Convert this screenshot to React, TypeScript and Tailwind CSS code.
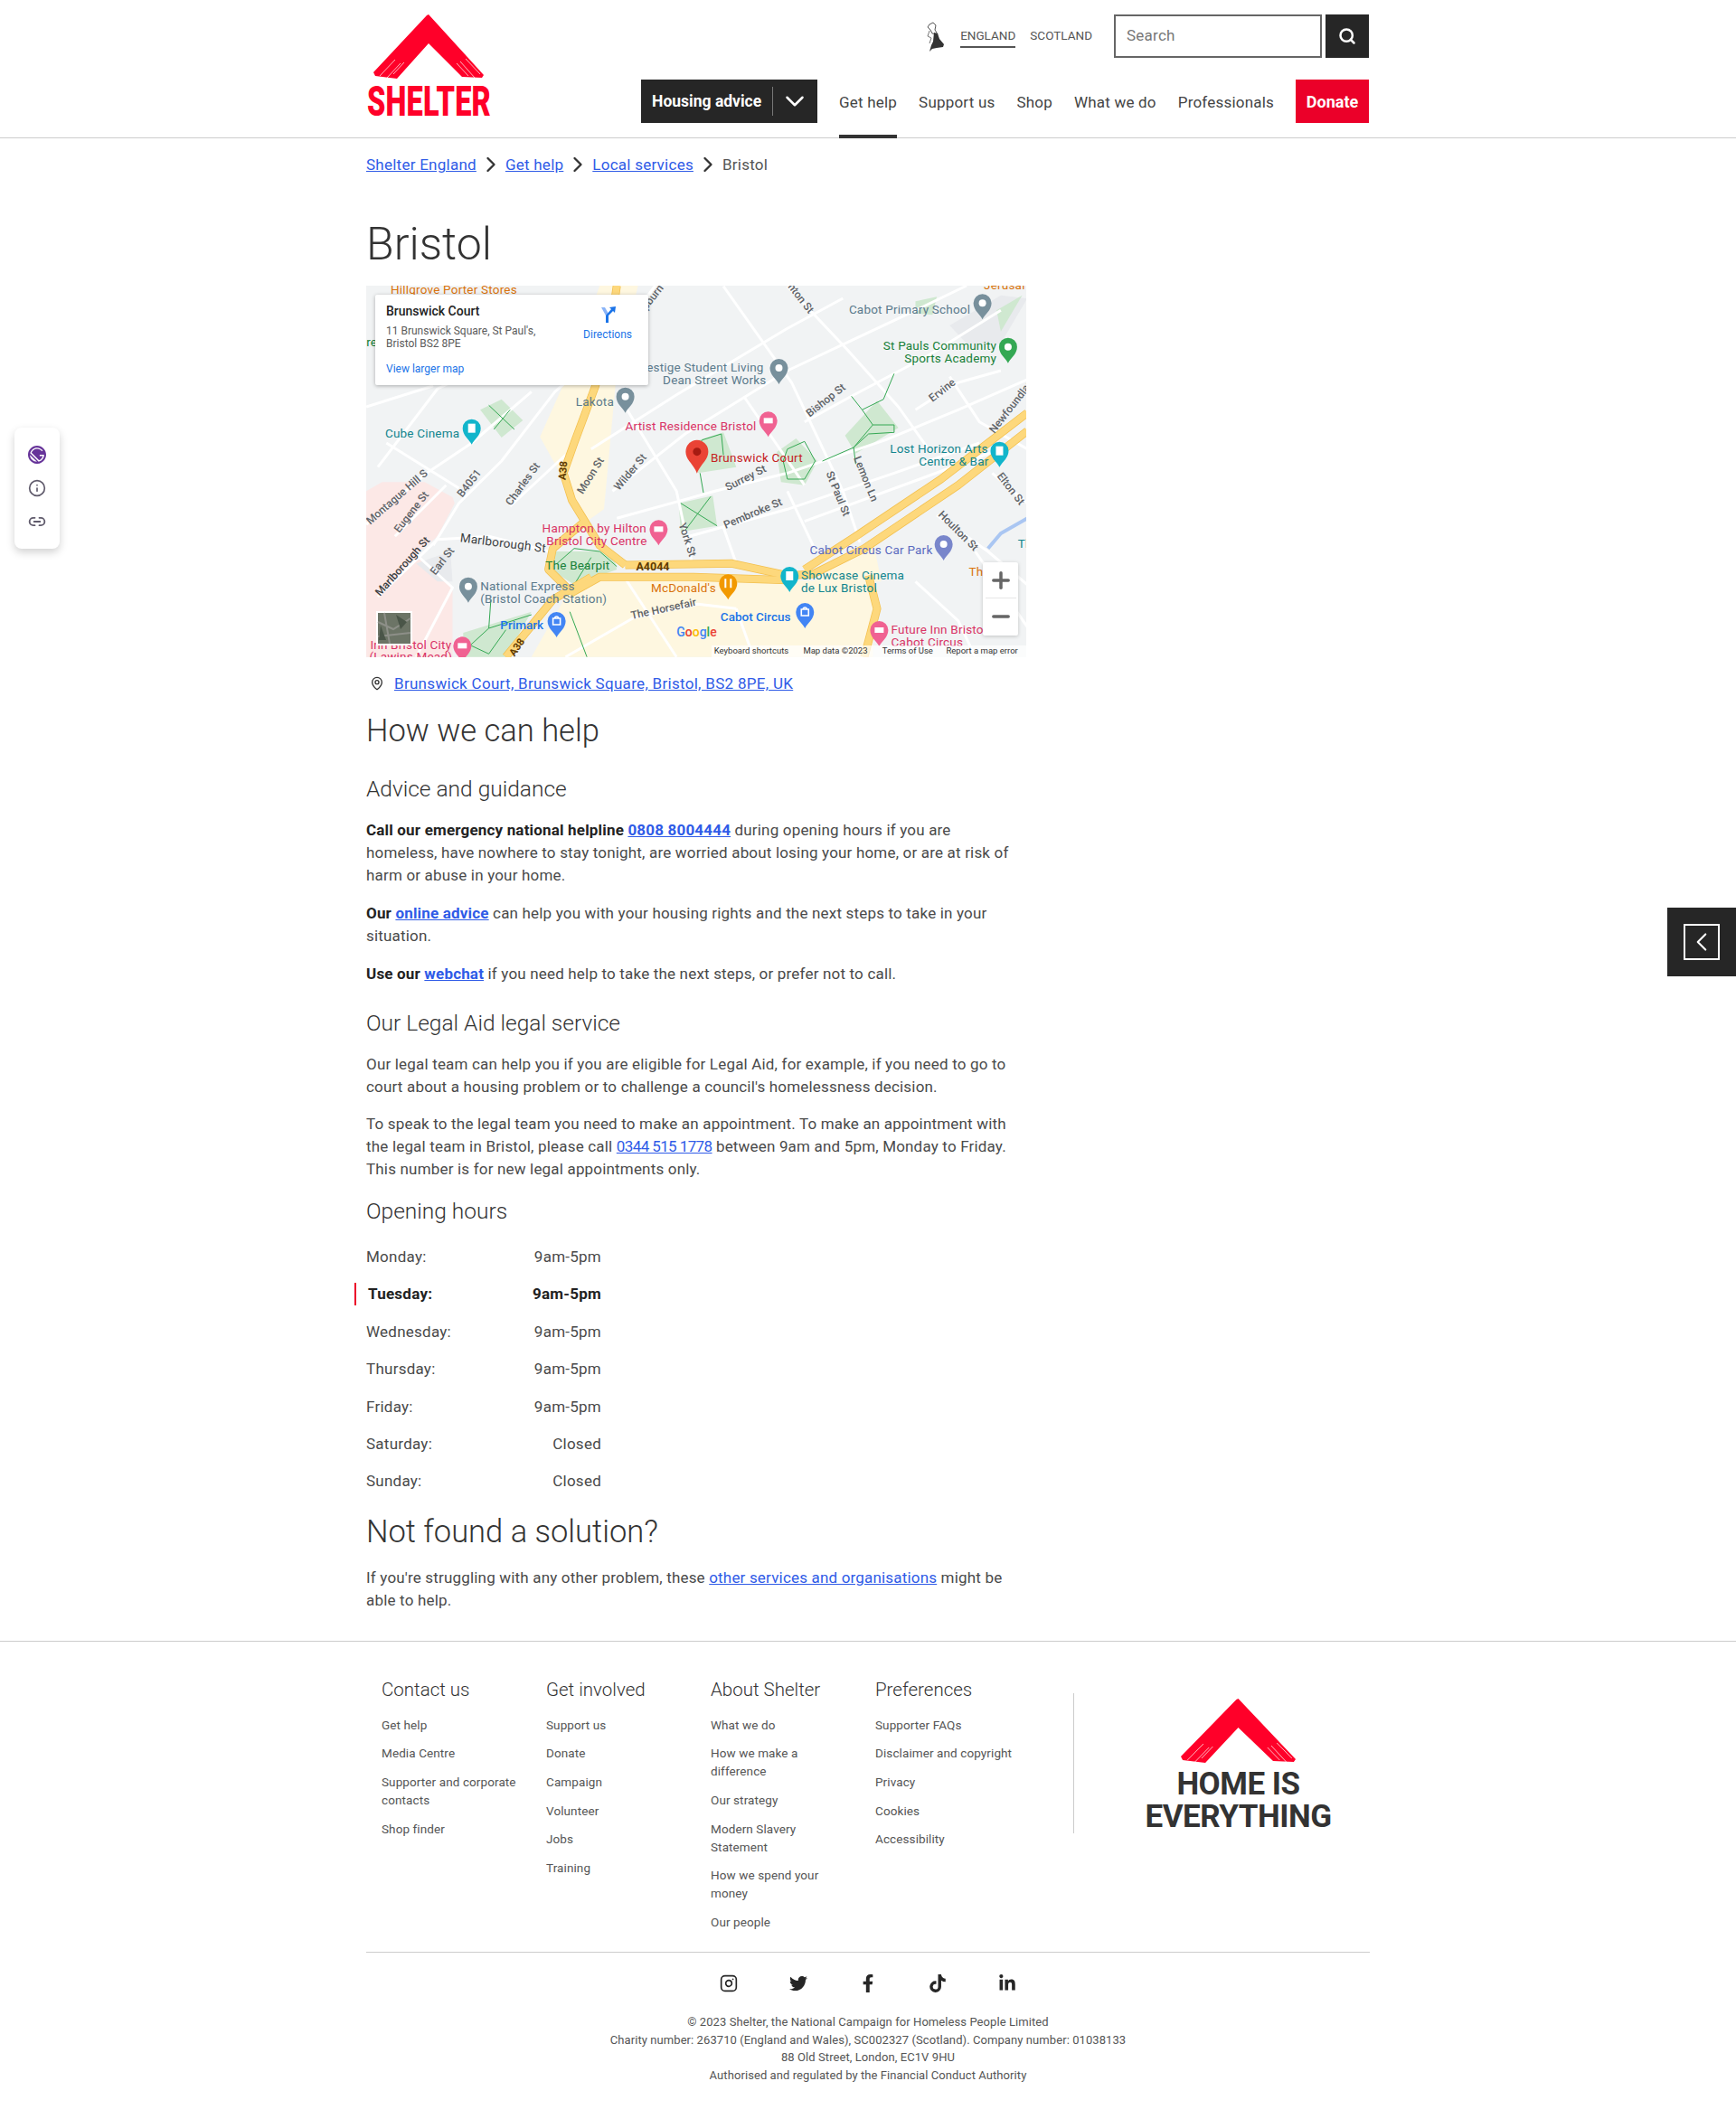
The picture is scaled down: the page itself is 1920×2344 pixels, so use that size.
import React from 'react';
import { ChevronDown, ChevronLeft, ChevronRight, Info, Instagram, Link2, MapPin, Minus, Plus, Search } from 'lucide-react';
import { FaFacebookF, FaLinkedinIn, FaTiktok, FaTwitter } from 'react-icons/fa';
import { SiGatsby } from 'react-icons/si';

const RED = '#ff0029';

// Brush-ended roof used in both logos
const RoofShape: React.FC = () => (
  <g>
    <path d="M61 0 L122 67 L120 70 L98 69 L61 32 L26 71 L2 68 L0 64 L59 1 Z" fill={RED} />
    <g stroke="#fff" strokeWidth="0.7" fill="none">
      <path d="M7 68 L24 50" />
      <path d="M15 70 L30 54" />
      <path d="M22 66 L34 53" />
      <path d="M112 70 L96 52" />
      <path d="M105 68 L92 54" />
      <path d="M118 66 L102 49" />
    </g>
  </g>
);

const ShelterLogo: React.FC = () => (
  <svg width="140" height="116" viewBox="0 0 140 116" className="block">
    <g transform="translate(8 1)">
      <RoofShape />
    </g>
    <text
      x="1"
      y="113"
      fill={RED}
      fontFamily="Roboto, sans-serif"
      fontWeight="900"
      fontSize="46"
      textLength="137"
      lengthAdjust="spacingAndGlyphs"
    >
      SHELTER
    </text>
  </svg>
);

const UkIcon: React.FC = () => (
  <svg width="24" height="34" viewBox="0 0 24 34" className="block">
    <path d="M9 1 L12 4 L11 9 L14 14 L8 13 L6 9 L3 6 L5 3 Z" fill="#fff" stroke="#555" strokeWidth="1" />
    <path d="M5 10 L3 16 L7 18 L5 24" fill="none" stroke="#777" strokeWidth="1" />
    <path d="M10 12 L14 13 L16 19 L21 25 L20 28 L13 29 L8 30 L5 33 L7 26 L9 22 Z" fill="#333" />
  </svg>
);

// --- map drawing. Points are measured off the reference crop, then scaled to map pixels ---
const mx = (z: number) => z / 2.119 - 6;
const my = (z: number) => z / 3 - 6;
const line = (pts: number[][]) => pts.map((p, i) => `${i ? 'L' : 'M'}${mx(p[0]).toFixed(1)} ${my(p[1]).toFixed(1)}`).join(' ');

const parks = [
  [[770, 540], [850, 505], [880, 620], [790, 640]],
  [[745, 740], [825, 715], [835, 815], [750, 835]],
  [[280, 430], [330, 395], [380, 465], [330, 522]],
  [[1135, 515], [1210, 400], [1260, 490], [1160, 575]],
  [[975, 570], [1020, 525], [1070, 600], [1040, 680], [985, 670]],
  [[450, 900], [590, 900], [600, 960], [500, 1010], [445, 960]],
  [[240, 1170], [400, 1100], [340, 1250], [240, 1250]],
  [[1300, 70], [1350, 55], [1340, 115], [1300, 110]],
  [[1490, 100], [1550, 50], [1500, 170]],
];

const parkPaths = [
  [[300, 415], [360, 495]],
  [[350, 430], [312, 495]],
  [[750, 740], [835, 815]],
  [[820, 718], [760, 830]],
  [[770, 600], [800, 530], [845, 510], [850, 580]],
  [[795, 640], [803, 705]],
  [[1082, 600], [1155, 555], [1200, 480], [1250, 480], [1250, 505], [1190, 510], [1155, 555]],
  [[1250, 310], [1225, 395], [1175, 430], [1150, 385]],
  [[1175, 430], [1200, 480]],
  [[1155, 555], [1160, 610]],
  [[1000, 560], [1040, 535], [1065, 600], [1040, 660], [1000, 660], [990, 600], [1000, 560]],
  [[460, 940], [500, 890], [560, 900], [600, 950]],
  [[500, 1010], [540, 920]],
  [[250, 1220], [300, 1155], [400, 1110]],
  [[240, 1200], [300, 1240], [340, 1160]],
  [[300, 1155], [305, 1060]],
  [[490, 1100], [530, 1250]],
];

const streets = [
  [[170, 880], [230, 740], [330, 600], [455, 370], [600, 190], [690, 18]],
  [[590, 700], [760, 510], [1000, 300], [1150, 200], [1300, 100], [1420, 18]],
  [[600, 790], [830, 700], [1000, 640], [1230, 530], [1400, 430], [1562, 330]],
  [[770, 850], [1000, 760], [1250, 640], [1450, 540]],
  [[620, 420], [740, 700], [775, 930]],
  [[850, 20], [1010, 340], [1130, 700], [1170, 870]],
  [[1000, 20], [1140, 230], [1260, 420], [1330, 560]],
  [[1040, 470], [1150, 385], [1330, 250], [1500, 100]],
  [[40, 1050], [180, 860], [300, 850], [440, 900]],
  [[13, 810], [155, 640], [260, 540], [400, 370]],
  [[80, 850], [200, 680]],
  [[350, 750], [480, 580]],
  [[480, 1250], [640, 1120], [790, 1075], [880, 1090]],
  [[1480, 640], [1562, 740]],
  [[1350, 780], [1470, 900], [1562, 1010]],
  [[13, 420], [170, 350]],
  [[40, 620], [180, 360], [240, 320]],
  [[230, 690], [60, 540]],
  [[1040, 800], [1310, 660], [1500, 560]],
  [[1300, 430], [1400, 340], [1500, 300]],
  [[1000, 700], [1060, 880]],
  [[900, 390], [1040, 680]],
  [[130, 1250], [215, 1020], [130, 910]],
  [[1380, 320], [1450, 470], [1562, 560]],
  [[850, 820], [880, 940]],
  [[620, 990], [740, 1250]],
  [[880, 1090], [920, 1250]],
  [[540, 560], [740, 380], [1000, 160], [1130, 60]],
  [[1300, 1000], [1400, 1130], [1440, 1250]],
  [[1440, 900], [1562, 1150]],
];

const highways = [
  [[600, 18], [590, 120], [550, 350], [500, 540], [475, 640], [495, 730], [525, 800], [560, 880], [620, 945]],
  [[620, 945], [870, 940], [1000, 980], [1060, 975], [1180, 890], [1400, 680], [1562, 500]],
  [[1040, 960], [1160, 850], [1360, 660], [1562, 440]],
  [[1190, 980], [1210, 1090], [1180, 1250]],
  [[525, 800], [450, 890], [440, 960], [490, 1030]],
  [[540, 985], [450, 1060], [340, 1250]],
  [[1000, 995], [780, 985], [560, 985], [490, 1040]],
];

type Lbl = [number, number, string, string, number?, 'start' | 'end'?];
const labels: Lbl[] = [
  [1144, 112, 'Cabot Primary School', '#5b7a8c'],
  [1490, 232, 'St Pauls Community', '#188038', 0, 'end'],
  [1490, 274, 'Sports Academy', '#188038', 0, 'end'],
  [670, 304, 'estige Student Living', '#5b7a8c'],
  [708, 346, 'Dean Street Works', '#5b7a8c'],
  [504, 418, 'Lakota', '#5b7a8c'],
  [620, 499, 'Artist Residence Bristol', '#d93366'],
  [820, 602, 'Brunswick Court', '#c5221f'],
  [57, 523, 'Cube Cinema', '#12858e'],
  [1240, 574, 'Lost Horizon Arts', '#12858e'],
  [1308, 616, 'Centre & Bar', '#12858e'],
  [425, 838, 'Hampton by Hilton', '#d93366'],
  [435, 880, 'Bristol City Centre', '#d93366'],
  [232, 868, 'Marlborough St', '#3c4043', 7],
  [433, 960, 'The Bearpit', '#188038'],
  [680, 1036, "McDonald's", '#d9730d'],
  [280, 1028, 'National Express', '#5b7a8c'],
  [280, 1070, '(Bristol Coach Station)', '#5b7a8c'],
  [1032, 992, 'Showcase Cinema', '#12858e'],
  [1032, 1034, 'de Lux Bristol', '#12858e'],
  [1052, 908, 'Cabot Circus Car Park', '#5c6bc0'],
  [1243, 1174, 'Future Inn Bristo', '#d93366'],
  [1243, 1216, 'Cabot Circus', '#d93366'],
  [22, 1225, 'Inn Bristol City', '#d93366'],
  [20, 1262, '(Lawins Mead)', '#d93366'],
  [1425, 982, 'Th', '#d9730d'],
  [1540, 888, 'Th', '#12858e'],
  [70, 44, 'Hillgrove Porter Stores', '#d9730d'],
  [1460, 30, 'Jerusal', '#d9730d'],
  [13, 220, 're', '#188038'],
];

const streetLabels: Lbl[] = [
  [1052, 455, 'Bishop St', '#5f6368', -38],
  [1340, 405, 'Ervine', '#5f6368', -38],
  [1485, 510, 'Newfoundland', '#5f6368', -52],
  [1490, 650, 'Elton St', '#5f6368', 52],
  [1352, 780, 'Houlton St', '#5f6368', 45],
  [1090, 640, 'St Paul St', '#5f6368', 68],
  [1155, 590, 'Lemon Ln', '#5f6368', 68],
  [860, 700, 'Surrey St', '#5f6368', -27],
  [855, 825, 'Pembroke St', '#5f6368', -23],
  [745, 810, 'York St', '#5f6368', 72],
  [605, 700, 'Wilder St', '#5f6368', -50],
  [520, 712, 'Moon St', '#5f6368', -58],
  [352, 750, 'Charles St', '#5f6368', -54],
  [90, 840, 'Eugene St', '#5f6368', -52],
  [175, 980, 'Earl St', '#5f6368', -52],
  [238, 722, 'B4051', '#5f6368', -52],
  [22, 812, 'Montague Hill S', '#5f6368', -41],
  [45, 1050, 'Marlborough St', '#3c4043', -48],
  [635, 1125, 'The Horsefair', '#5f6368', -12],
  [670, 100, 'pburn Rd', '#5f6368', -52],
  [1000, 22, 'nton St', '#5f6368', 52],
];

const Pin: React.FC<{ z: number[]; color: string; glyph?: React.ReactNode }> = ({ z, color, glyph }) => (
  <g transform={`translate(${mx(z[0])} ${my(z[1])})`}>
    <path d="M0 15 C-3 9 -10 5 -10 -3 A10 10 0 1 1 10 -3 C10 5 3 9 0 15 Z" fill={color} />
    {glyph ?? <circle cx="0" cy="-3" r="4" fill="#fff" />}
  </g>
);

const Bed = <rect x="-5" y="-6" width="10" height="6" fill="#fff" />;
const Film = <rect x="-4" y="-8" width="8" height="10" fill="#fff" />;
const Bag = <path d="M-4 -6 H4 V1 H-4 Z M-2 -6 A2 2 0 0 1 2 -6" fill="none" stroke="#fff" strokeWidth="1.6" />;
const Fork = <path d="M-3 -8 V2 M3 -8 V2" stroke="#fff" strokeWidth="2" />;

const MapDrawing: React.FC = () => (
  <svg width="730" height="411" viewBox="0 0 730 411" className="block font-['Roboto',sans-serif]">
    <rect width="730" height="411" fill="#f1f3f4" />
    {/* land use */}
    <path d={line([[13, 700], [50, 670], [150, 670], [215, 720], [220, 740], [180, 850], [130, 910], [215, 1020], [215, 1250], [13, 1250]]) + 'Z'} fill="#fce8e6" />
    <path d={line([[560, 18], [650, 18], [600, 300], [570, 760], [530, 800], [420, 520], [480, 330]]) + 'Z'} fill="#fef7e0" />
    <path d={line([[560, 990], [1200, 1000], [1200, 1250], [400, 1250], [480, 1050]]) + 'Z'} fill="#fef7e0" />
    <path d={line([[1060, 1000], [1200, 860], [1220, 1000]]) + 'Z'} fill="#fef7e0" />
    <path d={line([[1380, 150], [1500, 50], [1562, 60], [1500, 210], [1420, 210]]) + 'Z'} fill="#e8eaed" />
    <path d={line([[130, 940], [210, 900], [215, 1000], [180, 1000]]) + 'Z'} fill="#e8eaed" />
    {parks.map((p, i) => (
      <path key={i} d={line(p) + 'Z'} fill="#cfe8d0" />
    ))}
    {/* streets */}
    {streets.map((s, i) => (
      <path key={i} d={line(s)} fill="none" stroke="#fff" strokeWidth="3" strokeLinejoin="round" />
    ))}
    {parkPaths.map((p, i) => (
      <path key={i} d={line(p)} fill="none" stroke="#34a853" strokeWidth="1" />
    ))}
    <path d={line([[1470, 890], [1500, 840], [1562, 790]])} fill="none" stroke="#aac6f2" strokeWidth="4" />
    {highways.map((h, i) => (
      <path key={i} d={line(h)} fill="none" stroke="#f3c04f" strokeWidth="9" strokeLinejoin="round" />
    ))}
    {highways.map((h, i) => (
      <path key={i} d={line(h)} fill="none" stroke="#fdd87c" strokeWidth="7.5" strokeLinejoin="round" />
    ))}
    {/* labels */}
    {streetLabels.map(([x, y, t, c, r], i) => (
      <text key={i} transform={`translate(${mx(x)} ${my(y)}) rotate(${r ?? 0})`} fill={c} fontSize="12" fontWeight="500">
        {t}
      </text>
    ))}
    {labels.map(([x, y, t, c, r, a], i) => (
      <text key={i} transform={`translate(${mx(x)} ${my(y)}) rotate(${r ?? 0})`} textAnchor={a ?? 'start'} fill={c} fontSize="13.5" letterSpacing="0.2">
        {t}
      </text>
    ))}
    <text transform={`translate(${mx(480)} ${my(664)}) rotate(-85)`} fill="#5f3b00" fontSize="11.5" fontWeight="700">A38</text>
    <text transform={`translate(${mx(645)} ${my(964)})`} fill="#5f3b00" fontSize="12.5" fontWeight="700">A4044</text>
    <text transform={`translate(${mx(360)} ${my(1250)}) rotate(-55)`} fill="#5f3b00" fontSize="11.5" fontWeight="700">A38</text>
    <text transform={`translate(${mx(843)} ${my(1130)})`} fill="#1a73e8" fontSize="13.5" fontWeight="500">Cabot Circus</text>
    <text transform={`translate(${mx(327)} ${my(1159)})`} fill="#1a73e8" fontSize="13.5" fontWeight="500">Primark</text>
    <text transform={`translate(${mx(740)} ${my(1182)})`} fontSize="14" fontWeight="500">
      <tspan fill="#4285f4">G</tspan>
      <tspan fill="#ea4335">o</tspan>
      <tspan fill="#fbbc04">o</tspan>
      <tspan fill="#4285f4">g</tspan>
      <tspan fill="#34a853">l</tspan>
      <tspan fill="#ea4335">e</tspan>
    </text>
    {/* place pins */}
    <Pin z={[1457, 85]} color="#78909c" />
    <Pin z={[1517, 230]} color="#34a853" />
    <Pin z={[980, 300]} color="#78909c" />
    <Pin z={[620, 395]} color="#78909c" />
    <Pin z={[955, 475]} color="#f06292" glyph={Bed} />
    <Pin z={[260, 500]} color="#12b5cb" glyph={Film} />
    <Pin z={[1497, 575]} color="#12b5cb" glyph={Film} />
    <Pin z={[698, 835]} color="#f06292" glyph={Bed} />
    <Pin z={[1366, 885]} color="#7986cb" />
    <Pin z={[1005, 990]} color="#12b5cb" glyph={Film} />
    <Pin z={[861, 1015]} color="#f29900" glyph={Fork} />
    <Pin z={[252, 1025]} color="#78909c" />
    <Pin z={[459, 1140]} color="#4285f4" glyph={Bag} />
    <Pin z={[1041, 1110]} color="#4285f4" glyph={Bag} />
    <Pin z={[1215, 1170]} color="#f06292" glyph={Bed} />
    <Pin z={[238, 1222]} color="#f06292" glyph={Bed} />
    {/* selected place */}
    <g transform={`translate(${mx(788)} ${my(572)})`}>
      <path d="M0 23 C-3 14 -12.5 8 -12.5 -1 A12.5 13 0 1 1 12.5 -1 C12.5 8 3 14 0 23 Z" fill="#ea4335" />
      <circle cx="0" cy="-1" r="4.5" fill="#a61b12" />
    </g>
    {/* attribution */}
    <rect x={mx(822)} y={my(1212)} width="350" height="20" fill="#fff" fillOpacity="0.7" />
    {[
      [828, 'Keyboard shortcuts'],
      [1037, 'Map data ©2023'],
      [1222, 'Terms of Use'],
      [1372, 'Report a map error'],
    ].map(([x, t]) => (
      <text key={t as string} x={mx(x as number)} y={my(1238)} fontSize="9.5" fill="#333">
        {t}
      </text>
    ))}
    {/* satellite thumbnail */}
    <rect x="11" y="360" width="40" height="38" fill="#fff" />
    <rect x="13" y="362" width="36" height="34" fill="#6c7466" />
    <path d="M13 372 L30 380 L49 368 M20 362 L26 396 M13 388 L49 384" stroke="#8d8f88" strokeWidth="2" fill="none" />
    <path d="M33 364 L45 372 L38 380 Z M16 376 L22 392 L14 392 Z" fill="#4a5548" />
  </svg>
);

const Label3: React.FC<{ children: React.ReactNode; className?: string }> = ({ children, className }) => (
  <h3 className={`text-[24.5px] leading-[30px] font-light tracking-normal text-[#333] ${className ?? ''}`}>{children}</h3>
);

const linkCls = 'text-[#2f5be7] underline';
const paraCls = 'leading-[25px] tracking-[0.18px]';

const hours = [
  ['Monday:', '9am-5pm'],
  ['Tuesday:', '9am-5pm'],
  ['Wednesday:', '9am-5pm'],
  ['Thursday:', '9am-5pm'],
  ['Friday:', '9am-5pm'],
  ['Saturday:', 'Closed'],
  ['Sunday:', 'Closed'],
];

const footerCols: { title: string; links: string[] }[] = [
  { title: 'Contact us', links: ['Get help', 'Media Centre', 'Supporter and corporate contacts', 'Shop finder'] },
  { title: 'Get involved', links: ['Support us', 'Donate', 'Campaign', 'Volunteer', 'Jobs', 'Training'] },
  {
    title: 'About Shelter',
    links: ['What we do', 'How we make a difference', 'Our strategy', 'Modern Slavery Statement', 'How we spend your money', 'Our people'],
  },
  { title: 'Preferences', links: ['Supporter FAQs', 'Disclaimer and copyright', 'Privacy', 'Cookies', 'Accessibility'] },
];

const navItems = ['Get help', 'Support us', 'Shop', 'What we do', 'Professionals'];

export default function App() {
  return (
    <div className="relative min-h-[2344px] overflow-hidden bg-white font-['Roboto',sans-serif] text-[17px] tracking-[0.25px] text-[#4a4a4a]">
      {/* Header */}
      <header className="box-border h-[153px] border-b border-[#ccc]">
        <div className="mx-auto box-border flex w-[1110px] justify-between pr-[1px]">
          <div className="pt-[15px]">
            <ShelterLogo />
          </div>
          <div className="flex flex-col items-end pt-[16px]">
            <div className="flex h-[48px] items-start">
              <div className="mt-[8px]">
                <UkIcon />
              </div>
              <div className="ml-[15px] flex text-[13.5px] tracking-normal text-[#555]">
                <span className="mt-[8px] box-border h-[29px] border-b-2 border-[#555] leading-[30px]">ENGLAND</span>
                <span className="ml-[16px] mt-[8px] leading-[30px]">SCOTLAND</span>
              </div>
              <div className="ml-[24px] box-border flex h-[48px] w-[230px] items-center border-2 border-[#666] px-[12px] text-[#777]">
                Search
              </div>
              <div className="ml-[4px] flex h-[48px] w-[48px] items-center justify-center bg-[#262626]">
                <Search size={20} color="#fff" strokeWidth={3} />
              </div>
            </div>
            <div className="mt-[24px] flex h-[48px]">
              <div className="flex h-[48px] w-[195px] items-center bg-[#262626] text-white">
                <span className="ml-[12px] w-[133px] text-[17.5px] font-bold tracking-normal">Housing advice</span>
                <span className="h-[32px] w-px bg-[#777]" />
                <ChevronDown size={34} strokeWidth={1.8} className="ml-[7px]" />
              </div>
              <nav className="ml-[24px] flex tracking-[0.2px] text-[#444]">
                {navItems.map((n, i) => (
                  <span key={n} className={`mr-[24px] box-border h-[65px] leading-[50px] ${i === 0 ? 'border-b-4 border-[#333]' : ''}`}>
                    {n}
                  </span>
                ))}
              </nav>
              <div className="flex h-[48px] w-[81px] items-center justify-center bg-[#eb0029] text-[18px] font-bold tracking-normal text-white">
                Donate
              </div>
            </div>
          </div>
        </div>
      </header>

      <main className="mx-auto w-[1110px]">
        <div className="mt-[17px] flex h-[24px] items-center leading-[24px] text-[#555]">
          <a className={linkCls}>Shelter England</a>
          <ChevronRight size={28} strokeWidth={2} className="mx-[2px] text-[#333]" />
          <a className={linkCls}>Get help</a>
          <ChevronRight size={28} strokeWidth={2} className="mx-[2px] text-[#333]" />
          <a className={linkCls}>Local services</a>
          <ChevronRight size={28} strokeWidth={2} className="mx-[2px] text-[#333]" />
          <span>Bristol</span>
        </div>
        <h1 className="mt-[48px] mb-[18px] text-[50px] leading-[56px] font-light tracking-normal text-[#333]">Bristol</h1>

        <div className="relative h-[411px] w-[730px] overflow-hidden tracking-normal">
          <MapDrawing />
          {/* info window */}
          <div className="absolute left-[10px] top-[10px] flex h-[100px] w-[302px] justify-between rounded-[2px] bg-white pl-[12px] pr-[18px] pt-[9px] shadow-[0_1px_4px_rgba(0,0,0,0.3)]">
            <div>
              <div className="text-[14px] leading-[18px] font-medium text-[#222]">Brunswick Court</div>
              <div className="mt-[6px] text-[12px] leading-[14px] text-[#5b5b5b]">
                11 Brunswick Square, St Paul's,
                <br />
                Bristol BS2 8PE
              </div>
              <div className="mt-[14px] text-[12px] leading-[14px] text-[#1a73e8]">View larger map</div>
            </div>
            <div className="flex flex-col items-center pt-[3px] text-[12px] leading-[14px] text-[#1a73e8]">
              <svg width="20" height="20" viewBox="0 0 20 20">
                <path d="M3 2 L7 2 L11 9 L11 19 L8 19 L8 11 Z" fill="#8ab4f8" />
                <path d="M8 11 L14 4 L12 2 L19 1 L18 8 L16 6 L11 11 L11 19 L8 19 Z" fill="#1a73e8" />
              </svg>
              <div className="mt-[5px]">Directions</div>
            </div>
          </div>
          {/* zoom control */}
          <div className="absolute left-[682px] top-[306px] flex h-[81px] w-[39px] flex-col items-center rounded-[2px] bg-white shadow-[0_1px_4px_rgba(0,0,0,0.2)]">
            <div className="flex h-[40px] items-center border-b border-[#e6e6e6] px-[3px]">
              <Plus size={28} strokeWidth={3} color="#666" />
            </div>
            <div className="flex h-[40px] items-center">
              <Minus size={28} strokeWidth={3} color="#666" />
            </div>
          </div>
        </div>

        <div className="mt-[17px] flex h-[24px] items-center leading-[24px] tracking-[0.3px]">
          <MapPin size={16} strokeWidth={2} className="ml-[4px] mr-[11px] text-[#333]" />
          <a className={linkCls}>Brunswick Court, Brunswick Square, Bristol, BS2 8PE, UK</a>
        </div>

        <div className="w-[730px]">
          <h2 className="mt-[18px] text-[34.5px] leading-[44px] font-light tracking-normal text-[#333]">How we can help</h2>
          <Label3 className="mt-[28px]">Advice and guidance</Label3>
          <p className={`mt-[18px] ${paraCls}`}>
            <strong className="font-bold text-[#222]">
              Call our emergency national helpline <a className={linkCls}>0808 8004444</a>
            </strong>{' '}
            during opening hours if you are
            <br />
            homeless, have nowhere to stay tonight, are worried about losing your home, or are at risk of harm or abuse in your home.
          </p>
          <p className={`mt-[17px] ${paraCls}`}>
            <strong className="font-bold text-[#222]">
              Our <a className={linkCls}>online advice</a>
            </strong>{' '}
            can help you with your housing rights and the next steps to take in your situation.
          </p>
          <p className={`mt-[17px] ${paraCls}`}>
            <strong className="font-bold text-[#222]">
              Use our <a className={linkCls}>webchat</a>
            </strong>{' '}
            if you need help to take the next steps, or prefer not to call.
          </p>

          <Label3 className="mt-[27px]">Our Legal Aid legal service</Label3>
          <p className={`mt-[18px] ${paraCls}`}>
            Our legal team can help you if you are eligible for Legal Aid, for example, if you need to go to court about a housing problem or to challenge a council's homelessness decision.
          </p>
          <p className={`mt-[16px] ${paraCls}`}>
            To speak to the legal team you need to make an appointment. To make an appointment with the legal team in Bristol, please call <a className={`${linkCls} tracking-[-0.6px]`}>0344 515 1778</a> between 9am and 5pm, Monday to Friday. This number is for new legal appointments only.
          </p>

          <Label3 className="mt-[19px]">Opening hours</Label3>
          <div className="mt-[15px] w-[260px]">
            {hours.map(([d, h]) => {
              const today = d === 'Tuesday:';
              return (
                <div key={d} className={`relative flex h-[41.4px] items-center justify-between ${today ? 'pl-[2px] font-bold text-[#222]' : ''}`}>
                  {today && <span className="absolute -left-[13px] top-[8px] h-[25px] w-[2px] bg-[#eb0029]" />}
                  <span>{d}</span>
                  <span>{h}</span>
                </div>
              );
            })}
          </div>

          <h2 className="mt-[12px] text-[34.5px] leading-[44px] font-light tracking-normal text-[#333]">Not found a solution?</h2>
          <p className={`mt-[17px] ${paraCls}`}>
            If you're struggling with any other problem, these <a className={linkCls}>other services and organisations</a> might be able to help.
          </p>
        </div>
      </main>

      {/* Footer */}
      <footer className="mt-[32px] border-t border-[#ccc]">
        <div className="mx-auto w-[1110px]">
          <div className="flex pt-[39px]">
            <div className="ml-[17px] flex">
              {footerCols.map((c) => (
                <div key={c.title} className="w-[182px] pr-[30px]">
                  <h4 className="text-[20.5px] leading-[28px] font-light tracking-normal text-[#333]">{c.title}</h4>
                  <ul className="mt-[15px] text-[13.5px] leading-[20px] tracking-[0.1px] text-[#555]">
                    {c.links.map((l) => (
                      <li key={l} className="mb-[11.6px]">
                        {l}
                      </li>
                    ))}
                  </ul>
                </div>
              ))}
            </div>
            <div className="ml-[37px] mt-[18px] box-border flex h-[155px] w-[328px] flex-col items-center border-l border-[#ccc] pl-[36px]">
              <svg width="127" height="71" viewBox="0 0 122 71" preserveAspectRatio="none" className="mt-[6px] block">
                <RoofShape />
              </svg>
              <div className="mt-[6px] text-center text-[35px] leading-[36px] font-bold tracking-[-0.5px] text-[#333]">
                HOME IS
                <br />
                EVERYTHING
              </div>
            </div>
          </div>

          <div className="mt-[12px] border-t border-[#ccc]">
            <div className="mt-[24px] flex h-[20px] items-center justify-center gap-[57px] text-[#262626]">
              <Instagram size={20} strokeWidth={2} />
              <FaTwitter size={20} />
              <FaFacebookF size={20} />
              <FaTiktok size={20} />
              <FaLinkedinIn size={20} />
            </div>
            <div className="mt-[23px] text-center text-[13px] leading-[19.4px] tracking-[0.08px] text-[#555]">
              <div>© 2023 Shelter, the National Campaign for Homeless People Limited</div>
              <div>Charity number: 263710 (England and Wales), SC002327 (Scotland). Company number: 01038133</div>
              <div>88 Old Street, London, EC1V 9HU</div>
              <div>Authorised and regulated by the Financial Conduct Authority</div>
            </div>
          </div>
        </div>
      </footer>

      {/* Floating tool widget */}
      <div className="absolute left-[16px] top-[473px] flex h-[134px] w-[50px] flex-col items-center rounded-[8px] bg-white pt-[20px] shadow-[0_4px_10px_rgba(0,0,0,0.18)]">
        <SiGatsby size={20} color="#663399" />
        <Info size={20} strokeWidth={2} color="#5f5a6b" className="mt-[17px]" />
        <Link2 size={20} strokeWidth={2.2} color="#5f5a6b" className="mt-[17px]" />
      </div>

      {/* Side tab */}
      <div className="absolute right-0 top-[1004px] flex h-[76px] w-[76px] items-center justify-center bg-[#262626]">
        <div className="flex h-[40px] w-[40px] items-center justify-center border-2 border-white">
          <ChevronLeft size={34} strokeWidth={1.5} color="#fff" />
        </div>
      </div>
    </div>
  );
}
